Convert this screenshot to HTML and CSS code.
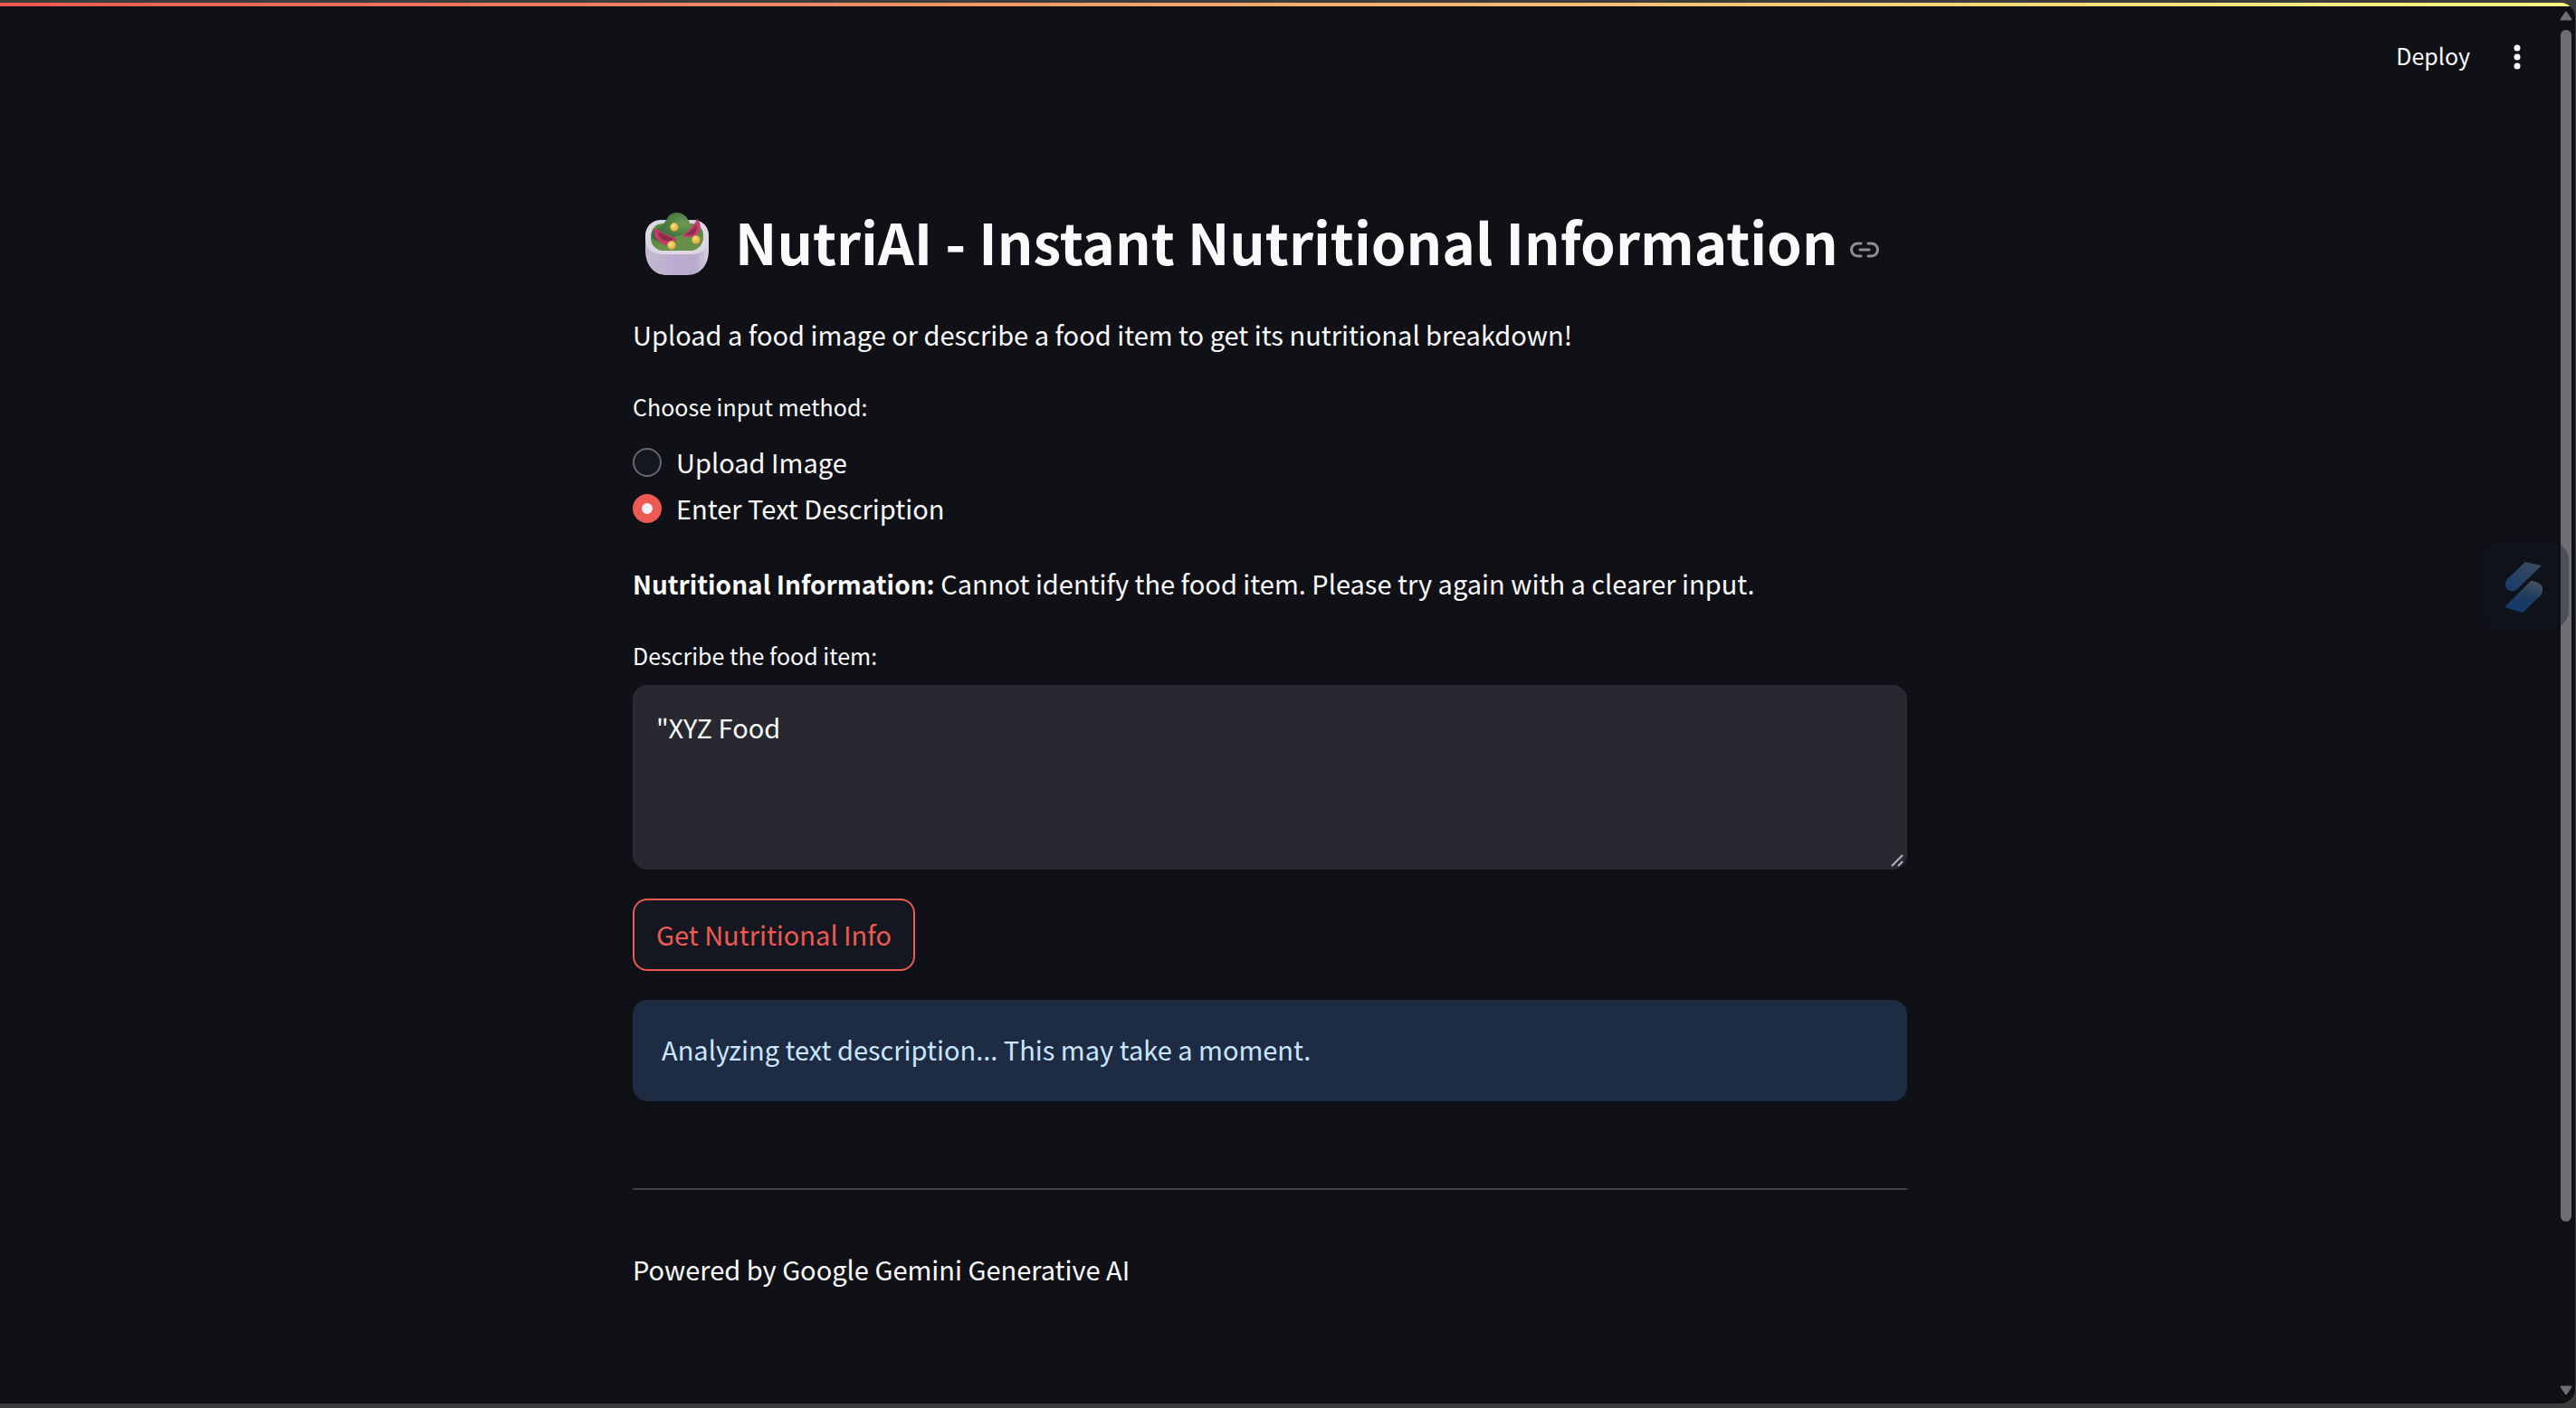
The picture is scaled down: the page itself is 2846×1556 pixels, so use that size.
FILE: index.html
```html
<!DOCTYPE html>
<html lang="en">
<head>
<meta charset="utf-8">
<meta name="viewport" content="width=device-width, initial-scale=1">
<title>NutriAI</title>
<link rel="stylesheet" href="styles.css">
</head>
<body>
<div class="window">
  <div class="decoration"></div>
  <header class="toolbar">
    <button class="deploy" type="button">Deploy</button>
    <button class="menu" type="button" aria-label="Main menu">
      <svg width="8" height="28" viewBox="0 0 8 28" fill="currentColor"><circle cx="4" cy="4" r="3.5"/><circle cx="4" cy="14" r="3.5"/><circle cx="4" cy="24" r="3.5"/></svg>
    </button>
  </header>

  <main class="page">
  <div class="content">
    <h1 class="title">
      <svg class="salad" viewBox="0 0 72 70" aria-hidden="true">
        <defs>
          <linearGradient id="bowl" x1="0" x2="1" y1="0" y2="0"><stop offset="0" stop-color="#c3bccd"/><stop offset=".5" stop-color="#b9abd0"/><stop offset=".8" stop-color="#b7accb"/><stop offset="1" stop-color="#d9d4df"/></linearGradient>
          <radialGradient id="leaf" cx=".7" cy=".35" r=".7"><stop offset="0" stop-color="#6f9b54"/><stop offset=".5" stop-color="#4b7d43"/><stop offset="1" stop-color="#3b6843"/></radialGradient>
          <radialGradient id="corn" cx=".4" cy=".35" r=".65"><stop offset="0" stop-color="#ffe577"/><stop offset="1" stop-color="#d9a637"/></radialGradient>
        </defs>
        <path d="M1 27C1 14 9 8 20 8h32c11 0 19 6 19 19v14c0 18-10 28-24 28H25C11 69 1 59 1 41z" fill="url(#bowl)"/>
        <path d="M1 27C1 14 9 8 20 8h32c11 0 19 6 19 19s-8 19-19 19H20C9 46 1 40 1 27z" fill="#dcd7e3"/>
        <path d="M7 28c0-10 5-16 14-16h30c9 0 14 5 14 14 0 9-6 16-15 16H22C13 42 7 36 7 28z" fill="#5b8b3d"/>
        <path d="M9 20c8-3 12-6 15-12C27 2 31 0 36 0s10 3 13 9c3 8 8 10 10 14 1 7-7 11-16 12-15 2-27-2-35-7 0-3 0-6 1-8z" fill="url(#leaf)"/>
        <path d="M11 36c8-1 16-7 25-10 10-3 22-1 29 0 0 9-6 16-15 16H22c-5 0-9-2-11-6z" fill="#668f48"/>
        <path d="M11 18c3-1 5 2 9 4 5 3 10 3 15 7 0 4-5 7-10 7-8-1-16-8-14-18z" fill="#c03c6a"/>
        <path d="M15 21c5 2 8 4 17 8-2 2-6 3-9 2-5-2-8-5-8-10z" fill="#8f2d48"/>
        <path d="M58 7c4 3 5 10 2 16-3 4-8 4-12 4-3 0-6 0-6-2 5-4 14-11 16-18z" fill="#c73f6e"/>
        <path d="M57 13c2 5 0 9-3 11-3 1-6 2-9 0 5-3 9-6 12-11z" fill="#8f2d48"/>
        <circle cx="33" cy="16" r="4.700" fill="url(#corn)"/><circle cx="30" cy="36" r="4.700" fill="url(#corn)"/><circle cx="57" cy="30" r="4.700" fill="url(#corn)"/>
      </svg>
      <span>NutriAI - Instant Nutritional Information</span>
      <a class="anchor" href="#" aria-label="Link to heading">
        <svg width="34" height="18" viewBox="0 0 34 18" fill="none" stroke="#8e8f93" stroke-width="3" stroke-linecap="round"><path d="M13 2H9.500a7 7 0 0 0 0 14H13M21 2h3.500a7 7 0 0 1 0 14H21M12 9h10"/></svg>
      </a>
    </h1>

    <p class="text">Upload a food image or describe a food item to get its nutritional breakdown!</p>

    <fieldset class="choices">
      <legend class="label">Choose input method:</legend>
      <label class="choice"><input type="radio" name="method">Upload Image</label>
      <label class="choice"><input type="radio" name="method" checked>Enter Text Description</label>
    </fieldset>

    <p class="text"><strong>Nutritional Information:</strong> Cannot identify the food item. Please try again with a clearer input.</p>

    <div class="field">
      <label class="label" for="food">Describe the food item:</label>
      <div class="area">
        <textarea id="food" spellcheck="false">"XYZ Food</textarea>
        <svg class="grip" width="14" height="14" viewBox="0 0 14 14" stroke="#b5b5b8" stroke-width="2"><path d="M1 13L13 1M8 13l5-5"/></svg>
      </div>
    </div>

    <button class="submit" type="button">Get Nutritional Info</button>

    <div class="notice" role="status">Analyzing text description... This may take a moment.</div>

    <hr class="rule">

    <p class="text">Powered by Google Gemini Generative AI</p>
  </div>
  </main>

  <div class="scrollbar" aria-hidden="true">
    <svg width="14" height="11" viewBox="0 0 14 11"><path d="M7 1.500L12.500 9.500h-11z" fill="#6e6f73" stroke="#6e6f73" stroke-width="2" stroke-linejoin="round"/></svg>
    <div class="track"><div class="thumb"></div></div>
    <svg width="14" height="11" viewBox="0 0 14 11"><path d="M7 9.500L12.500 1.500h-11z" fill="#6e6f73" stroke="#6e6f73" stroke-width="2" stroke-linejoin="round"/></svg>
  </div>

  <div class="assistant" aria-hidden="true">
    <svg width="42" height="56" viewBox="0 0 42 56">
      <defs>
        <linearGradient id="upper" x1="1" y1="0" x2="0" y2="1"><stop offset="0" stop-color="#3f4c5e"/><stop offset="1" stop-color="#133a68"/></linearGradient>
        <linearGradient id="lower" x1=".7" y1="0" x2=".4" y2="1"><stop offset="0" stop-color="#47515f"/><stop offset=".5" stop-color="#1d3c62"/><stop offset="1" stop-color="#12396a"/></linearGradient>
      </defs>
      <path d="M23 0l18 4-27 26c-3 3-7 3-10 1-4-3-4-9 0-13z" fill="url(#upper)"/>
      <path d="M0 50l29-29c5 0 11 2 13 7 1 4-1 8-3 10L20 56z" fill="url(#lower)"/>
    </svg>
  </div>
</div>
</body>
</html>
```
FILE: styles.css
```css
* { box-sizing: border-box; }

body {
  margin: 0;
  min-height: 100vh;
  display: flex;
  padding: 3px 1px 5px 0;
  background: #3c3c3c;
  color: #fafafa;
  font-family: "Noto Sans CJK SC", "Open Sans", sans-serif;
  font-size: 29px;
  line-height: 51px;
}

.window {
  position: relative;
  flex: 1;
  min-width: 0;
  overflow: hidden;
  background: #101116;
  border-radius: 0 16px 16px 0;
}

.decoration {
  height: 4px;
  background: linear-gradient(90deg, #ec5953, #fdfd84);
}

.toolbar {
  display: flex;
  justify-content: flex-end;
  align-items: center;
  gap: 48px;
  height: 112px;
  padding-right: 60px;
}

button, textarea { font: inherit; }

.deploy, .menu {
  display: flex;
  padding: 0;
  border: 0;
  background: none;
  color: #fafafa;
}

.deploy {
  padding-bottom: 4px;
  font-size: 25px;
  line-height: 40px;
}

/* leaves the gutter of the scrollbar free */
.page { padding-right: 39px; }

.content {
  display: flex;
  flex-direction: column;
  gap: 32px;
  width: 1408px;
  max-width: 100%;
  margin: 0 auto;
  padding: 101px 0 112px;
}

.title {
  display: flex;
  align-items: center;
  margin: 0;
  padding-left: 13px;
  font-size: 62px;
  font-weight: 700;
  line-height: 92px;
  white-space: nowrap;
}

.salad {
  flex: none;
  width: 72px;
  height: 70px;
  margin: 8px 28px 0 0;
}

.anchor {
  display: flex;
  margin-left: 12px;
  padding-top: 20px;
}

.text { margin: 0; }

.text strong { font-size: 28px; line-height: 1; }

.choices { margin: 0; padding: 0; border: 0; }

.choices .label { margin-bottom: 14px; }

.label { display: block; padding: 0; font-size: 25px; line-height: 44px; }

.choice { display: flex; align-items: center; gap: 16px; }

.choice input {
  appearance: none;
  width: 32px;
  height: 32px;
  margin: 0;
  border: 2px solid #67686e;
  border-radius: 50%;
  background: #141720;
}

.choice input:checked {
  border: 10px solid #ed5a54;
  background: #f0f2f6;
}

.field { display: flex; flex-direction: column; gap: 11px; }

.area { position: relative; display: flex; }

.area textarea {
  flex: 1;
  height: 204px;
  padding: 19px 24px;
  border: 2px solid #2a2b31;
  border-radius: 16px;
  outline: 0;
  resize: none;
  background: #272830;
  color: #fafafa;
}

.grip { position: absolute; right: 4px; bottom: 3px; }

.submit {
  align-self: flex-start;
  height: 80px;
  padding: 0 24px 2px;
  border: 2px solid #ee5a52;
  border-radius: 16px;
  background: #141720;
  color: #ee5a52;
}

.notice {
  padding: 29px 32px 32px;
  border-radius: 16px;
  background: #1e2c43;
  color: #c9e6fd;
}

.rule {
  width: 100%;
  height: 2px;
  margin: 64px 0 30px;
  border: 0;
  background: #404146;
}

.scrollbar {
  position: absolute;
  top: 9px;
  right: 3px;
  bottom: 9px;
  display: flex;
  flex-direction: column;
  align-items: center;
  gap: 10px;
}

.track {
  display: flex;
  flex: 1;
  flex-direction: column;
  padding-bottom: 171px;
}

.thumb {
  flex: 1;
  width: 12px;
  border-radius: 6px;
  background: #6e6f73;
}

.assistant {
  position: absolute;
  top: 596px;
  right: 7px;
  display: flex;
  align-items: center;
  padding: 22px 29px 18px 25px;
  border-radius: 20px;
  background: rgba(14, 19, 29, .35);
}
```
